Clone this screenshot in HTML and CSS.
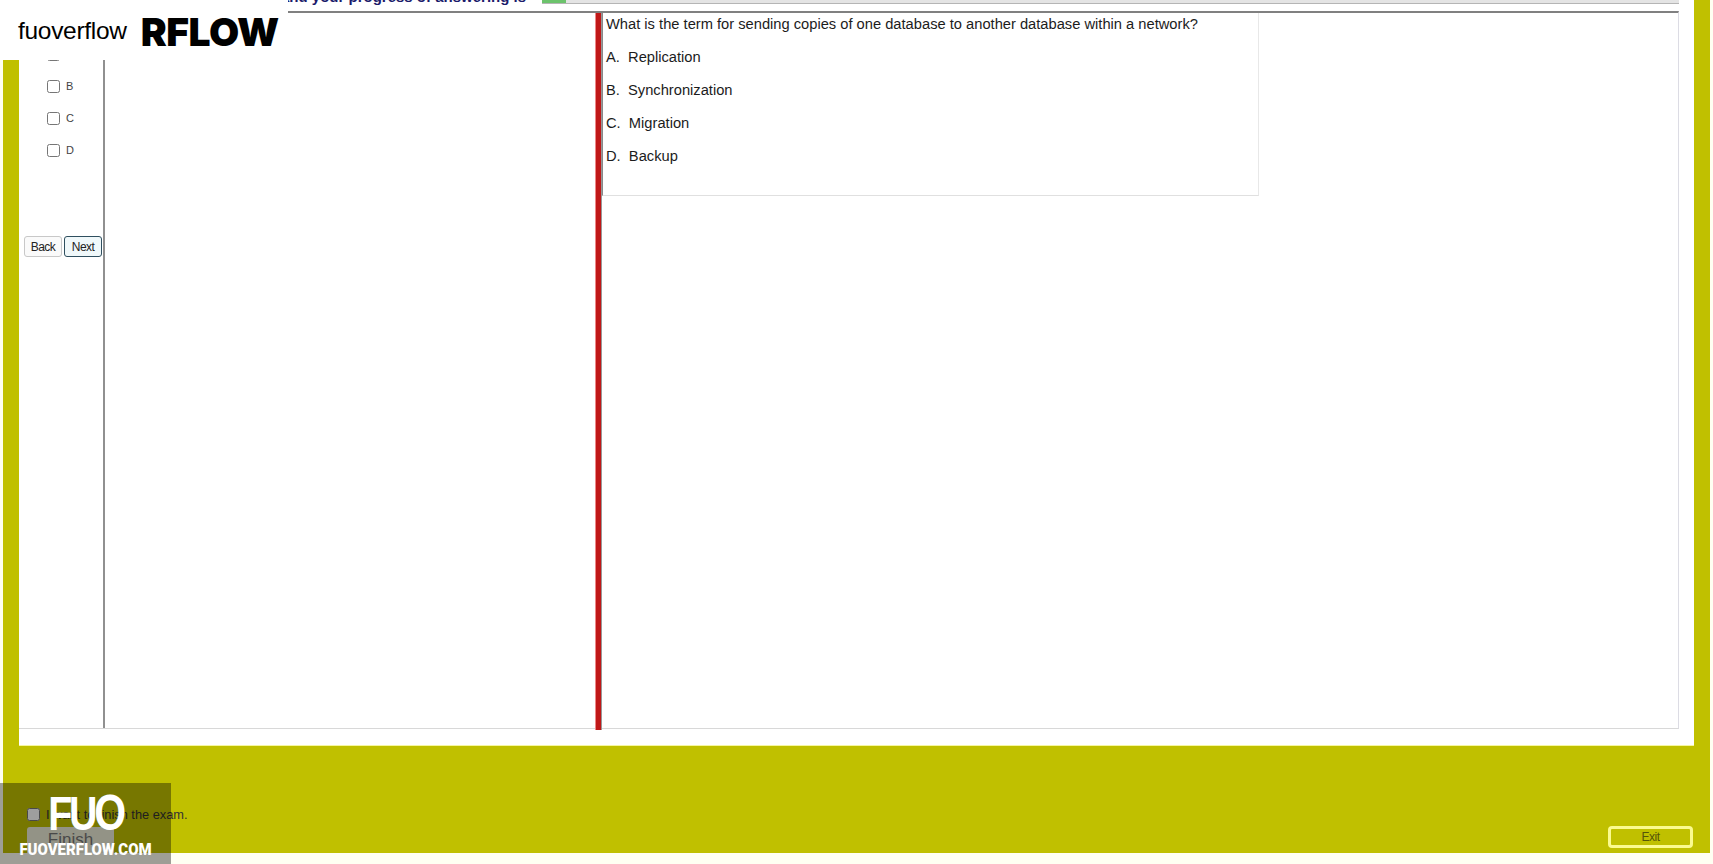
FILE: index.html
```html
<!DOCTYPE html>
<html lang="en">
<head>
    <meta charset="UTF-8">
    <meta name="viewport" content="width=device-width, initial-scale=1.0">
    <title>Exam</title>
    <link rel="stylesheet" href="styles.css">
</head>
<body>
    <div class="frame">
        <div class="panel">
            <div class="progress-row">
                <span class="progress-label">and your progress of answering is</span>
                <div class="progress-bar"><div class="progress-fill"></div></div>
            </div>

            <div class="exam">
                <div class="answers">
                    <label class="answer"><input type="checkbox"> A</label>
                    <label class="answer"><input type="checkbox"> B</label>
                    <label class="answer"><input type="checkbox"> C</label>
                    <label class="answer"><input type="checkbox"> D</label>
                    <div class="nav">
                        <button class="nav-btn">Back</button>
                        <button class="nav-btn focused">Next</button>
                    </div>
                </div>
                <div class="blank"></div>
                <div class="splitter"></div>
                <div class="content">
                    <div class="question">
                        <p>What is the term for sending copies of one database to another database within a network?</p>
                        <p>A.&nbsp; Replication</p>
                        <p>B.&nbsp; Synchronization</p>
                        <p>C.&nbsp; Migration</p>
                        <p>D.&nbsp; Backup</p>
                    </div>
                </div>
            </div>
        </div>

        <div class="footer">
            <div class="finish">
                <label class="finish-check"><input type="checkbox"> I want to finish the exam.</label>
                <button class="finish-btn">Finish</button>
            </div>
            <button class="exit-btn">Exit</button>
        </div>
    </div>

    <!-- watermarks over the page -->
    <div class="brand">
        <span class="brand-name">fuoverflow</span>
        <span class="brand-bold">RFLOW</span>
    </div>
    <div class="stamp">
        <div class="stamp-logo">FU<span class="stamp-o">O</span></div>
        <div class="stamp-site">FUOVERFLOW.COM</div>
    </div>
</body>
</html>
```

FILE: styles.css
```css
html, body {
    height: 864px;
}

body {
    margin: 0;
    overflow: hidden;
    position: relative;
    background-color: #fffff2;
    font-family: 'Liberation Sans', Arial, sans-serif;
    color: #1c1c1c;
}

.frame {
    height: 853px;
    margin: 0 3px;
    padding: 0 16px;
    overflow: hidden;
    background-color: #c0c000;
}

.panel {
    height: 745px;
    padding-right: 15px;
    background-color: #fff;
    border-bottom: 1px solid #f6f6a0;
    display: flex;
    flex-direction: column;
}

/* Progress row, cut off by the top of the window */
.progress-row {
    height: 11px;
    display: flex;
    align-items: flex-start;
    gap: 16px;
    padding-left: 262px;
    overflow: hidden;
}

.progress-label {
    margin-top: -11px;
    font-size: 15px;
    line-height: 16px;
    font-weight: bold;
    color: #1b1b6b;
    white-space: nowrap;
}

.progress-bar {
    width: 1140px;
    height: 3px;
    background-color: #e4e4e4;
    border-bottom: 1px solid #b5b5b5;
}

.progress-fill {
    width: 24px;
    height: 3px;
    background-color: #6cc36c;
}

/* Exam area */
.exam {
    flex: 1;
    margin-bottom: 16px;
    display: flex;
    border-top: 2px solid #808080;
    border-bottom: 1px solid #d8d8d8;
    border-right: 1px solid #dcdce4;
}

.answers {
    width: 86px;
    flex-shrink: 0;
    box-sizing: border-box;
    padding-top: 25px;
    border-right: 2px solid #909090;
}

.answer {
    height: 32px;
    padding-left: 28px;
    display: flex;
    align-items: center;
    gap: 6px;
    font-size: 11px;
    color: #444;
}

.answer input {
    width: 13px;
    height: 13px;
    margin: 0;
}

.nav {
    margin-top: 70px;
    padding-left: 5px;
    display: flex;
    gap: 2px;
}

.nav-btn {
    width: 38px;
    height: 21px;
    padding: 0;
    background-color: #fafafa;
    border: 1px solid #c8c8c8;
    border-radius: 3px;
    font-family: inherit;
    font-size: 12px;
    letter-spacing: -0.6px;
    color: #222;
}

.nav-btn.focused {
    background-color: #f0f8fa;
    border: 1px solid #2f4f5f;
}

.blank {
    width: 490px;
    flex-shrink: 0;
}

.splitter {
    width: 7px;
    margin-bottom: -2px;
    flex-shrink: 0;
    background-color: #c01818;
    border-left: 1px solid #e88;
    border-right: 1px solid #999;
    box-sizing: border-box;
}

.content {
    flex: 1;
}

.question {
    width: 657px;
    height: 183px;
    box-sizing: border-box;
    padding: 2px 0 0 3px;
    border-left: 1px solid #888;
    border-right: 1px solid #e8e8e8;
    border-bottom: 1px solid #e0e0e0;
    font-size: 14.7px;
}

.question p {
    margin: 0 0 15px;
    line-height: 18px;
}

/* Footer on the olive band */
.footer {
    height: 107px;
    box-sizing: border-box;
    padding: 61px 1px 5px 8px;
    display: flex;
    justify-content: space-between;
    align-items: flex-end;
}

.finish {
    align-self: flex-start;
}

.finish-check {
    display: flex;
    align-items: center;
    gap: 6px;
    font-size: 12.8px;
    color: #333;
}

.finish-check input {
    width: 13px;
    height: 13px;
    margin: 0;
}

.finish-btn {
    display: block;
    width: 87px;
    height: 36px;
    margin-top: 5px;
    padding: 0 0 10px;
    background-color: #eeeed8;
    border: none;
    border-radius: 3px;
    font-family: inherit;
    font-size: 17px;
    color: #777;
}

.exit-btn {
    width: 85px;
    height: 22px;
    padding: 0;
    background-color: transparent;
    border: 3px solid #fbfb90;
    border-radius: 4px;
    font-family: inherit;
    font-size: 12px;
    letter-spacing: -0.5px;
    color: #55550a;
}

/* Watermarks */
.brand {
    position: absolute;
    top: 0;
    left: 0;
    width: 288px;
    height: 60px;
    box-sizing: border-box;
    padding: 2px 0 0 18px;
    background-color: #fff;
    display: flex;
    align-items: center;
    gap: 14px;
    color: #000;
}

.brand-name {
    font-size: 24.5px;
    letter-spacing: -0.3px;
}

.brand-bold {
    font-family: 'Inter', sans-serif;
    font-size: 39px;
    font-weight: 900;
    letter-spacing: -0.5px;
}

.stamp {
    position: absolute;
    left: 0;
    bottom: 0;
    width: 171px;
    height: 81px;
    background-color: rgba(0, 0, 0, 0.38);
    color: #fff;
    text-align: center;
}

.stamp-logo {
    margin-top: 6px;
    font-family: 'Liberation Sans', sans-serif;
    font-size: 48px;
    line-height: 48px;
    font-weight: bold;
    letter-spacing: -4px;
    transform: scaleX(0.82);
}

.stamp-o {
    font-size: 50px;
}

.stamp-site {
    font-family: 'Roboto', sans-serif;
    font-size: 17px;
    line-height: 16px;
    font-weight: 900;
    margin-top: 3px;
    transform: scaleX(0.88);
    white-space: nowrap;
}
```
